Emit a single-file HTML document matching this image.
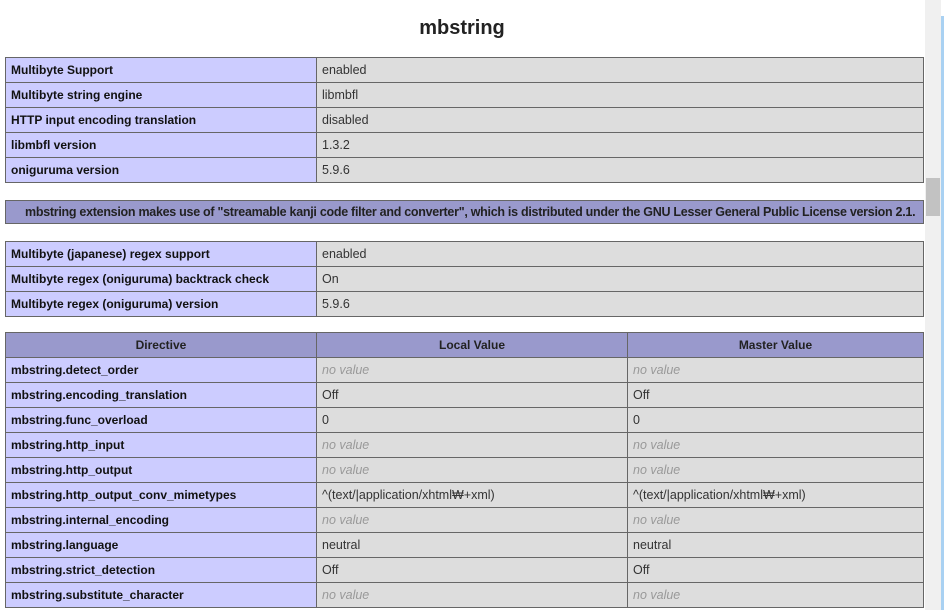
<!DOCTYPE html><html><head><style>
body{margin:0;background:#fff;width:944px;height:610px;overflow:hidden;position:relative;font-family:"Liberation Sans",sans-serif;color:#222}
h2{position:absolute;top:15px;left:0;width:924px;margin:0;text-align:center;font-size:20px;font-weight:bold;line-height:26px}
table{position:absolute;left:5px;width:919px;border-collapse:collapse;table-layout:fixed}
td,th{border:1px solid #666;height:25px;padding:0 5px;font-size:12.5px;box-sizing:border-box;white-space:nowrap;overflow:hidden}
.e{background:#ccf;width:311px;font-weight:bold;font-size:12px;color:#111}
.v{background:#ddd;color:#333}
th{background:#99c;font-weight:bold;text-align:center;font-size:12px}
i{color:#999}
.h{background:#99c;font-weight:bold;padding-left:19px;height:23px;font-size:12.5px;letter-spacing:-0.28px}
.sb{position:absolute;left:925px;top:0;width:16px;height:610px;background:#f0f0f0}
.th{position:absolute;left:926px;top:178px;width:14px;height:38px;background:#c2c2c2}
.bl{position:absolute;left:941px;top:16px;width:3px;height:594px;background:#a9d1f2}
</style></head><body>
<h2>mbstring</h2>
<table style="top:57px">
<tr><td class="e">Multibyte Support</td><td class="v">enabled</td></tr>
<tr><td class="e">Multibyte string engine</td><td class="v">libmbfl</td></tr>
<tr><td class="e">HTTP input encoding translation</td><td class="v">disabled</td></tr>
<tr><td class="e">libmbfl version</td><td class="v">1.3.2</td></tr>
<tr><td class="e">oniguruma version</td><td class="v">5.9.6</td></tr>
</table>
<table style="top:200px"><tr><td class="h">mbstring extension makes use of "streamable kanji code filter and converter", which is distributed under the GNU Lesser General Public License version 2.1.</td></tr></table>
<table style="top:241px">
<tr><td class="e">Multibyte (japanese) regex support</td><td class="v">enabled</td></tr>
<tr><td class="e">Multibyte regex (oniguruma) backtrack check</td><td class="v">On</td></tr>
<tr><td class="e">Multibyte regex (oniguruma) version</td><td class="v">5.9.6</td></tr>
</table>
<table style="top:332px">
<tr><th style="width:311px">Directive</th><th style="width:311px">Local Value</th><th>Master Value</th></tr>
<tr><td class="e">mbstring.detect_order</td><td class="v"><i>no value</i></td><td class="v"><i>no value</i></td></tr>
<tr><td class="e">mbstring.encoding_translation</td><td class="v">Off</td><td class="v">Off</td></tr>
<tr><td class="e">mbstring.func_overload</td><td class="v">0</td><td class="v">0</td></tr>
<tr><td class="e">mbstring.http_input</td><td class="v"><i>no value</i></td><td class="v"><i>no value</i></td></tr>
<tr><td class="e">mbstring.http_output</td><td class="v"><i>no value</i></td><td class="v"><i>no value</i></td></tr>
<tr><td class="e">mbstring.http_output_conv_mimetypes</td><td class="v">^(text/|application/xhtml₩+xml)</td><td class="v">^(text/|application/xhtml₩+xml)</td></tr>
<tr><td class="e">mbstring.internal_encoding</td><td class="v"><i>no value</i></td><td class="v"><i>no value</i></td></tr>
<tr><td class="e">mbstring.language</td><td class="v">neutral</td><td class="v">neutral</td></tr>
<tr><td class="e">mbstring.strict_detection</td><td class="v">Off</td><td class="v">Off</td></tr>
<tr><td class="e">mbstring.substitute_character</td><td class="v"><i>no value</i></td><td class="v"><i>no value</i></td></tr>
</table>
<div class="sb"></div><div class="th"></div><div class="bl"></div>
</body></html>
